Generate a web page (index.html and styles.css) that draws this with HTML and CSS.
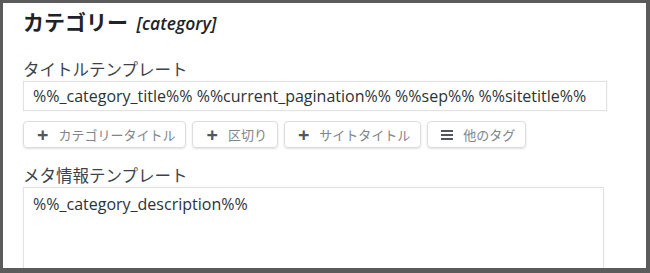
FILE: index.html
```html
<!DOCTYPE html>
<html lang="ja">
<head>
<meta charset="UTF-8" />
<title>カテゴリー</title>
<link rel="stylesheet" href="styles.css">
</head>
<body>

<div class="frame">

  <h2 class="titulo">カテゴリー <em>[category]</em></h2>

  <!-- Título -->
  <div class="campo">
    <label>タイトルテンプレート</label>
    <div class="entrada">%%_category_title%% %%current_pagination%% %%sep%% %%sitetitle%%</div>
    <div class="botoes">
      <span class="botao"><span class="mais">+</span>カテゴリータイトル</span>
      <span class="botao"><span class="mais">+</span>区切り</span>
      <span class="botao"><span class="mais">+</span>サイトタイトル</span>
      <span class="botao"><span class="menu-ico"><i></i><i></i><i></i></span>他のタグ</span>
    </div>
  </div>

  <!-- Meta -->
  <div class="campo">
    <label>メタ情報テンプレート</label>
    <div class="entrada area">%%_category_description%%</div>
  </div>

</div>

</body>
</html>
```

FILE: styles.css
```css
body {
  margin: 0;
  font-family: "Open Sans", "Noto Sans CJK JP", sans-serif;
  color: #333;
}
.frame {
  height: 273px;
  box-sizing: border-box;
  border-style: solid;
  border-color: #5b5b5b;
  border-width: 3px 4px 5px 3px;
  background: #fff;
  padding: 5px 0 0 20px;
  overflow: hidden;
}
.titulo {
  margin: 0;
  font-size: 21px;
  line-height: 28px;
  font-weight: bold;
  color: #1d2327;
}
.titulo em {
  font-size: 17.5px;
  font-weight: 600;
  margin-left: 3px;
}
.campo {
  margin-top: 22px;
}
.campo + .campo {
  margin-top: 17px;
}
label {
  display: block;
  font-size: 16.5px;
  line-height: 22px;
  color: #3c434a;
}
.entrada {
  width: 584px;
  box-sizing: border-box;
  border: 1px solid #e2e2e2;
  padding: 3px 9px;
  font-size: 16px;
  line-height: 22px;
  color: #2c3338;
  box-shadow: 0 0 2px rgba(0,0,0,0.06);
}
.area {
  width: 581px;
  height: 120px;
  padding-top: 5px;
}
.botoes {
  display: flex;
  gap: 6px;
  margin-top: 10px;
}
.botao {
  display: flex;
  align-items: center;
  height: 27px;
  box-sizing: border-box;
  padding: 0 10px 0 13px;
  border: 1px solid #dcdcde;
  border-radius: 4px;
  box-shadow: 0 1px 2px rgba(0,0,0,0.12);
  font-size: 13px;
  color: #80858a;
}
.mais {
  font-size: 20px;
  font-weight: bold;
  color: #50575e;
  margin-right: 10px;
  line-height: 1;
}
.menu-ico {
  display: flex;
  flex-direction: column;
  gap: 2px;
  width: 12px;
  margin-right: 10px;
}
.menu-ico i {
  display: block;
  height: 2px;
  background: #50575e;
}
```
